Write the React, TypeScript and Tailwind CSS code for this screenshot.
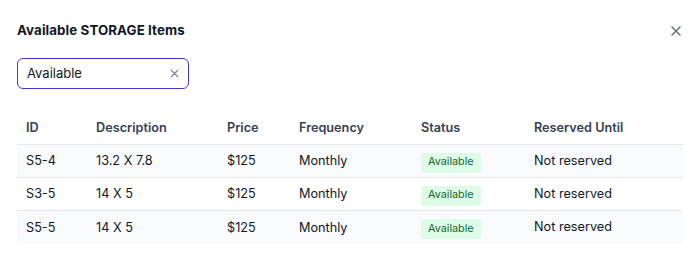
import React from "react";

const rows = [
  { id: "S5-4", desc: "13.2 X 7.8", price: "$125", freq: "Monthly" },
  { id: "S3-5", desc: "14 X 5", price: "$125", freq: "Monthly" },
  { id: "S5-5", desc: "14 X 5", price: "$125", freq: "Monthly" },
];

const cols = "grid grid-cols-[70px_131px_72px_122px_113px_1fr]";

export default function App() {
  return (
    <div className="w-[698px] h-[259px] bg-white px-[17px] text-[12.7px] text-[#111827]" style={{ fontFamily: "Inter, 'Liberation Sans', sans-serif" }}>
      <div className="flex items-center justify-between h-[61px] pt-[1px]">
        <h2 className="text-[13.3px] font-bold text-[#111827] tracking-[0.1px]">
          Available STORAGE Items
        </h2>
        <button className="mr-[-1px] text-[#6b7280]" aria-label="Close">
          <svg width="12" height="12" viewBox="0 0 12 12" fill="none" stroke="currentColor" strokeWidth="1.6" strokeLinecap="round">
            <path d="M2 2l8 8M10 2l-8 8" />
          </svg>
        </button>
      </div>
      <div className="flex items-center w-[172px] h-[31px] border border-[#4338ca] rounded-[6px] pl-[9px] pr-[9px] mt-[-3px]">
        <span className="flex-1 text-[13px] text-[#111827]">Available</span>
        <svg width="9" height="9" viewBox="0 0 10 10" fill="none" stroke="#6b7280" strokeWidth="1.2" strokeLinecap="round">
          <path d="M1.5 1.5l7 7M8.5 1.5l-7 7" />
        </svg>
      </div>
      <div className="mt-[23px] w-[666px]">
        <div className={`${cols} h-[33px] items-center border-b border-[#e5e7eb] font-semibold text-[#374151]`}>
          <div className="pl-[9px]">ID</div>
          <div className="pl-[9px]">Description</div>
          <div className="pl-[9px]">Price</div>
          <div className="pl-[9px]">Frequency</div>
          <div className="pl-[9px]">Status</div>
          <div className="pl-[9px]">Reserved Until</div>
        </div>
        {rows.map((r, i) => (
          <div
            key={r.id}
            className={`${cols} h-[33px] items-center ${i < rows.length - 1 ? "border-b border-[#e5e7eb]" : ""} ${i % 2 === 0 ? "bg-[#f9fafb]" : "bg-white"}`}
          >
            <div className="pl-[9px]">{r.id}</div>
            <div className="pl-[9px]">{r.desc}</div>
            <div className="pl-[9px]">{r.price}</div>
            <div className="pl-[9px]">{r.freq}</div>
            <div className="pl-[9px] pt-[2px]">
              <span className="inline-flex items-center h-[20px] px-[7px] rounded-[4px] bg-[#dcfce7] text-[#166534] text-[10.8px]">Available</span>
            </div>
            <div className="pl-[9px] pb-[1px]">Not reserved</div>
          </div>
        ))}
      </div>
    </div>
  );
}
